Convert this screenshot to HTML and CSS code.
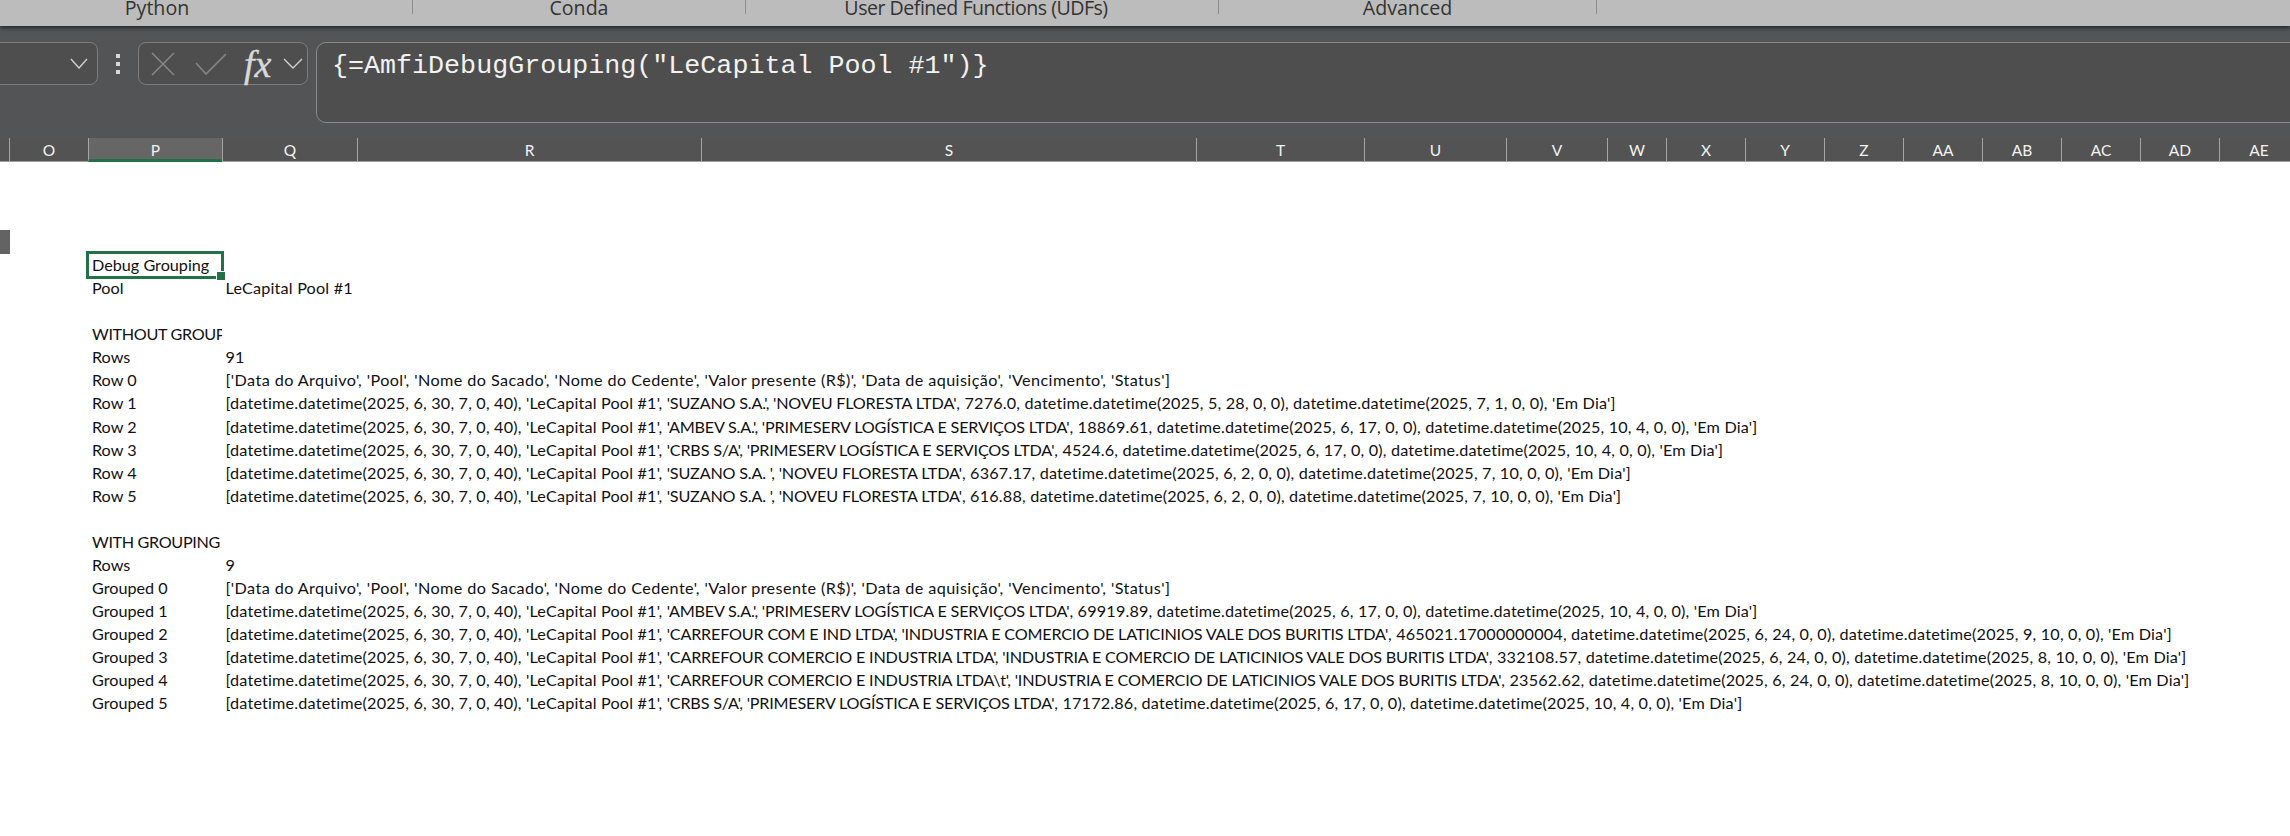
FILE: index.html
```html
<!DOCTYPE html>
<html lang="pt">
<head>
<meta charset="UTF-8" />
<title>Debug Grouping</title>
<link rel="stylesheet" href="styles.css">
</head>
<body>
  <div class="ribbon">
    <div class="ribbon-group group-python">Python</div>
    <div class="ribbon-group group-conda">Conda</div>
    <div class="ribbon-group group-udf">User Defined Functions (UDFs)</div>
    <div class="ribbon-group group-advanced">Advanced</div>
  </div>

  <div class="formula-bar">
    <div class="name-box">
      <svg class="chevron" width="18" height="11" viewBox="0 0 18 11"><path d="M1 1 L9 10 L17 1" /></svg>
    </div>
    <div class="grip"><span></span><span></span><span></span></div>
    <div class="fx-buttons">
      <svg class="fx-icon" width="24" height="24" viewBox="0 0 24 24"><path d="M1 1 L23 23 M23 1 L1 23" /></svg>
      <svg class="fx-icon" width="32" height="22" viewBox="0 0 32 22"><path d="M1 10 L11 21 L31 1" /></svg>
      <span class="fx-label">fx</span>
      <svg class="chevron" width="20" height="11" viewBox="0 0 20 11"><path d="M1 1 L10 10 L19 1" /></svg>
    </div>
    <div class="formula-box">{=AmfiDebugGrouping("LeCapital Pool #1")}</div>
  </div>

  <div class="col-headers">
    <div class="col-head col-o">O</div>
    <div class="col-head col-p selected">P</div>
    <div class="col-head col-q">Q</div>
    <div class="col-head col-r">R</div>
    <div class="col-head col-s">S</div>
    <div class="col-head col-t">T</div>
    <div class="col-head col-u">U</div>
    <div class="col-head col-v">V</div>
    <div class="col-head col-w">W</div>
    <div class="col-head col-n">X</div>
    <div class="col-head col-n">Y</div>
    <div class="col-head col-n">Z</div>
    <div class="col-head col-n">AA</div>
    <div class="col-head col-n">AB</div>
    <div class="col-head col-n">AC</div>
    <div class="col-head col-n">AD</div>
    <div class="col-head col-n">AE</div>
  </div>

  <div class="sheet">
    <div class="row-marker"></div>
    <div class="row"><div class="cell-a active">Debug Grouping<i class="handle"></i></div><div class="cell-b"></div></div>
    <div class="row"><div class="cell-a">Pool</div><div class="cell-b">LeCapital Pool #1</div></div>
    <div class="row"></div>
    <div class="row"><div class="cell-a title">WITHOUT GROUPING</div><div class="cell-b"></div></div>
    <div class="row"><div class="cell-a">Rows</div><div class="cell-b">91</div></div>
    <div class="row"><div class="cell-a">Row 0</div><div class="cell-b head">['Data do Arquivo', 'Pool', 'Nome do Sacado', 'Nome do Cedente', 'Valor presente (R$)', 'Data de aquisição', 'Vencimento', 'Status']</div></div>
    <div class="row row-tall"><div class="cell-a">Row 1</div><div class="cell-b">[datetime.datetime(2025, 6, 30, 7, 0, 40), 'LeCapital Pool #1', <span class="caps">'SUZANO S.A.', 'NOVEU FLORESTA LTDA'</span>, 7276.0, datetime.datetime(2025, 5, 28, 0, 0), datetime.datetime(2025, 7, 1, 0, 0), 'Em Dia']</div></div>
    <div class="row"><div class="cell-a">Row 2</div><div class="cell-b">[datetime.datetime(2025, 6, 30, 7, 0, 40), 'LeCapital Pool #1', <span class="caps">'AMBEV S.A.', 'PRIMESERV LOGÍSTICA E SERVIÇOS LTDA'</span>, 18869.61, datetime.datetime(2025, 6, 17, 0, 0), datetime.datetime(2025, 10, 4, 0, 0), 'Em Dia']</div></div>
    <div class="row"><div class="cell-a">Row 3</div><div class="cell-b">[datetime.datetime(2025, 6, 30, 7, 0, 40), 'LeCapital Pool #1', <span class="caps">'CRBS S/A', 'PRIMESERV LOGÍSTICA E SERVIÇOS LTDA'</span>, 4524.6, datetime.datetime(2025, 6, 17, 0, 0), datetime.datetime(2025, 10, 4, 0, 0), 'Em Dia']</div></div>
    <div class="row"><div class="cell-a">Row 4</div><div class="cell-b">[datetime.datetime(2025, 6, 30, 7, 0, 40), 'LeCapital Pool #1', <span class="caps">'SUZANO S.A. ', 'NOVEU FLORESTA LTDA'</span>, 6367.17, datetime.datetime(2025, 6, 2, 0, 0), datetime.datetime(2025, 7, 10, 0, 0), 'Em Dia']</div></div>
    <div class="row"><div class="cell-a">Row 5</div><div class="cell-b">[datetime.datetime(2025, 6, 30, 7, 0, 40), 'LeCapital Pool #1', <span class="caps">'SUZANO S.A. ', 'NOVEU FLORESTA LTDA'</span>, 616.88, datetime.datetime(2025, 6, 2, 0, 0), datetime.datetime(2025, 7, 10, 0, 0), 'Em Dia']</div></div>
    <div class="row"></div>
    <div class="row"><div class="cell-a title">WITH GROUPING</div><div class="cell-b"></div></div>
    <div class="row"><div class="cell-a">Rows</div><div class="cell-b">9</div></div>
    <div class="row"><div class="cell-a">Grouped 0</div><div class="cell-b head">['Data do Arquivo', 'Pool', 'Nome do Sacado', 'Nome do Cedente', 'Valor presente (R$)', 'Data de aquisição', 'Vencimento', 'Status']</div></div>
    <div class="row"><div class="cell-a">Grouped 1</div><div class="cell-b">[datetime.datetime(2025, 6, 30, 7, 0, 40), 'LeCapital Pool #1', <span class="caps">'AMBEV S.A.', 'PRIMESERV LOGÍSTICA E SERVIÇOS LTDA'</span>, 69919.89, datetime.datetime(2025, 6, 17, 0, 0), datetime.datetime(2025, 10, 4, 0, 0), 'Em Dia']</div></div>
    <div class="row"><div class="cell-a">Grouped 2</div><div class="cell-b">[datetime.datetime(2025, 6, 30, 7, 0, 40), 'LeCapital Pool #1', <span class="caps">'CARREFOUR COM E IND LTDA', 'INDUSTRIA E COMERCIO DE LATICINIOS VALE DOS BURITIS LTDA'</span>, 465021.17000000004, datetime.datetime(2025, 6, 24, 0, 0), datetime.datetime(2025, 9, 10, 0, 0), 'Em Dia']</div></div>
    <div class="row"><div class="cell-a">Grouped 3</div><div class="cell-b">[datetime.datetime(2025, 6, 30, 7, 0, 40), 'LeCapital Pool #1', <span class="caps">'CARREFOUR COMERCIO E INDUSTRIA LTDA', 'INDUSTRIA E COMERCIO DE LATICINIOS VALE DOS BURITIS LTDA'</span>, 332108.57, datetime.datetime(2025, 6, 24, 0, 0), datetime.datetime(2025, 8, 10, 0, 0), 'Em Dia']</div></div>
    <div class="row"><div class="cell-a">Grouped 4</div><div class="cell-b">[datetime.datetime(2025, 6, 30, 7, 0, 40), 'LeCapital Pool #1', <span class="caps">'CARREFOUR COMERCIO E INDUSTRIA LTDA\t', 'INDUSTRIA E COMERCIO DE LATICINIOS VALE DOS BURITIS LTDA'</span>, 23562.62, datetime.datetime(2025, 6, 24, 0, 0), datetime.datetime(2025, 8, 10, 0, 0), 'Em Dia']</div></div>
    <div class="row"><div class="cell-a">Grouped 5</div><div class="cell-b">[datetime.datetime(2025, 6, 30, 7, 0, 40), 'LeCapital Pool #1', <span class="caps">'CRBS S/A', 'PRIMESERV LOGÍSTICA E SERVIÇOS LTDA'</span>, 17172.86, datetime.datetime(2025, 6, 17, 0, 0), datetime.datetime(2025, 10, 4, 0, 0), 'Em Dia']</div></div>
  </div>
</body>
</html>
```

FILE: styles.css
```css
*, *::before, *::after {
  box-sizing: border-box;
}
html, body {
  height: 100%;
}
body {
  margin: 0;
  background: #fff;
  overflow: hidden;
  font-family: Lato, "Liberation Sans", sans-serif;
}

/* Ribbon, only the group labels are in view */
.ribbon {
  display: flex;
  height: 26px;
  background: #bcbcbc;
  box-shadow: 0 2px 4px rgba(0, 0, 0, 0.55);
  position: relative;
  overflow: hidden;
  color: #333;
  font-family: "Open Sans", sans-serif;
  font-size: 19.6px;
}
.ribbon-group {
  flex: none;
  height: 14px;
  line-height: 16px;
  text-align: center;
  border-right: 1px solid #8d8d8d;
}
.ribbon-group.group-python { width: 413px; padding-right: 98px; }
.ribbon-group.group-conda { width: 333px; }
.ribbon-group.group-udf { width: 473px; padding-right: 12px; letter-spacing: -0.5px; }
.ribbon-group.group-advanced { width: 378px; }

/* Formula bar */
.formula-bar {
  display: flex;
  height: 112px;
  padding: 16px 0 15px;
  background: #525456;
}
.name-box {
  flex: none;
  width: 108px;
  height: 43px;
  margin-left: -10px;
  padding-right: 9px;
  display: flex;
  align-items: center;
  justify-content: flex-end;
  background: #4e4e4e;
  border: 1px solid #7d7d7d;
  border-radius: 8px;
}
.chevron path, .fx-icon path {
  fill: none;
  stroke-width: 1.4;
}
.chevron path { stroke: #d0d0d0; }
.fx-icon path { stroke: #858585; stroke-width: 1.6; }
.grip {
  flex: none;
  width: 40px;
  height: 43px;
  display: flex;
  flex-direction: column;
  align-items: center;
  justify-content: center;
  gap: 4px;
}
.grip span {
  width: 4px;
  height: 4px;
  background: #d8d8d8;
}
.fx-buttons {
  flex: none;
  width: 170px;
  height: 43px;
  padding: 0 4px 0 12px;
  display: flex;
  align-items: center;
  background: #4e4e4e;
  border: 1px solid #7d7d7d;
  border-radius: 8px;
}
.fx-icon + .fx-icon {
  margin-left: 20px;
}
.fx-label {
  width: 29px;
  margin-left: 17px;
  margin-right: 10px;
  color: #d8d8d8;
  font-family: "Liberation Serif", serif;
  font-style: italic;
  font-size: 38px;
  line-height: 40px;
  -webkit-text-stroke: 0.4px #d8d8d8;
}
.formula-box {
  flex: 1;
  margin-left: 8px;
  margin-right: -12px;
  padding: 4px 0 0 15px;
  background: #4e4e4e;
  border: 1px solid #8a8a8a;
  border-radius: 10px 0 0 10px;
  color: #f2f2f2;
  font-family: "Liberation Mono", monospace;
  font-size: 26.7px;
  line-height: 38px;
}

/* Column headers */
.col-headers {
  display: flex;
  height: 24px;
  padding-left: 9px;
  background: #535353;
  border-bottom: 1px solid #a0a0a0;
  color: #f2f2f2;
  font-size: 15.5px;
}
.col-head {
  flex: none;
  height: 23px;
  line-height: 25px;
  text-align: center;
  border-left: 1px solid #a5a5a5;
}
.col-head.selected {
  height: 24px;
  background: #666;
  border-bottom: 3px solid #217346;
}
.col-o { width: 79px; }
.col-p { width: 134px; }
.col-q { width: 135px; }
.col-r { width: 344px; }
.col-s { width: 495px; }
.col-t { width: 168px; }
.col-u { width: 142px; }
.col-v { width: 101px; }
.col-w { width: 59px; }
.col-n { width: 79px; }

/* Sheet */
.sheet {
  position: relative;
  padding-top: 91px;
  color: #111;
  font-size: 16.2px;
}
.row-marker {
  position: absolute;
  left: 0;
  top: 68px;
  width: 10px;
  height: 24px;
  background: #636363;
}
.row {
  display: flex;
  height: 23px;
  line-height: 23px;
  padding-left: 92px;
  white-space: pre;
}
.row-tall {
  height: 24px;
}
.cell-a {
  width: 130px;
  flex: none;
  overflow: hidden;
}
.cell-a.title {
  letter-spacing: -0.35px;
}
.cell-a.active {
  overflow: visible;
  position: relative;
  z-index: 1;
}
.cell-a.active::before {
  content: "";
  position: absolute;
  left: -6px;
  top: -2px;
  width: 138px;
  height: 28px;
  border: 3px solid #217346;
}
.handle {
  position: absolute;
  left: 125px;
  top: 19px;
  width: 8px;
  height: 8px;
  background: #217346;
  outline: 1px solid #fff;
}
.cell-b {
  margin-left: 3.5px;
  letter-spacing: 0.18px;
}
.cell-b.head {
  letter-spacing: 0.41px;
}
.caps {
  letter-spacing: -0.2px;
}
```
